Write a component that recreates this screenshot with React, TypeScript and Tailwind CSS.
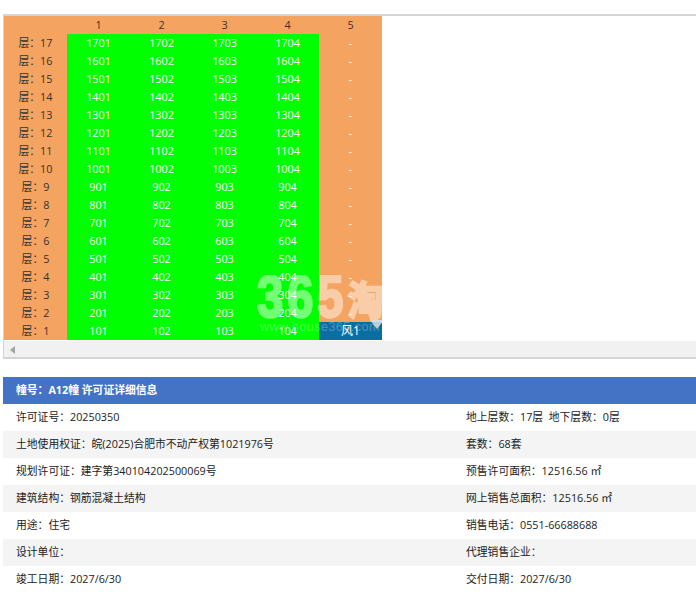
const floors = Array.from({ length: 17 }, (_, i) => 17 - i);

const info = [
  ["许可证号：20250350", "地上层数：17层  地下层数：0层"],
  ["土地使用权证：皖(2025)合肥市不动产权第1021976号", "套数：68套"],
  ["规划许可证：建字第340104202500069号", "预售许可面积：12516.56 ㎡"],
  ["建筑结构：钢筋混凝土结构", "网上销售总面积：12516.56 ㎡"],
  ["用途：住宅", "销售电话：0551-66688688"],
  ["设计单位：", "代理销售企业："],
  ["竣工日期：2027/6/30", "交付日期：2027/6/30"],
];

export default function App() {
  return (
    <div className="h-[602px] w-[696px] overflow-hidden bg-white pt-3.5 font-['Open_Sans','Noto_Sans_CJK_SC',sans-serif] text-[10.8px]">
      <div className="relative ml-[3px] h-[345px] overflow-hidden border-b-2 border-l border-t-2 border-[#d4d4d4]">
        <table className="w-[378px] table-fixed border-collapse text-center leading-[18px]">
          <thead>
            <tr className="h-[18px] bg-[#f4a460] text-[#333]">
              <th className="w-[63px] font-normal"></th>
              {[1, 2, 3, 4, 5].map((n) => (
                <th key={n} className="w-[63px] font-normal">
                  {n}
                </th>
              ))}
            </tr>
          </thead>
          <tbody>
            {floors.map((f) => (
              <tr key={f} className="h-[18px] text-white">
                <td className="bg-[#f4a460] text-[#333]">层：{f}</td>
                {[1, 2, 3, 4].map((u) => (
                  <td key={u} className="bg-[#00ff00]">
                    {f * 100 + u}
                  </td>
                ))}
                {f === 1 ? (
                  <td className="bg-[#0a6ea3] text-xs">风1</td>
                ) : (
                  <td className="bg-[#f4a460]">-</td>
                )}
              </tr>
            ))}
          </tbody>
        </table>
        <div className="mt-px flex h-[17px] items-center bg-[#f1f1f1] pl-1.5">
          <svg width="5" height="8" viewBox="0 0 5 8">
            <path d="M5 0 L0 4 L5 8 Z" fill="#a3a3a3" />
          </svg>
        </div>
        <div className="pointer-events-none absolute left-[253px] top-[259px] h-[70px] w-[125px] overflow-hidden text-white">
          <div className="flex h-[46px] items-start opacity-45 [-webkit-text-stroke:2px_white]">
            <span className="inline-block origin-top scale-y-[1.27] font-['Liberation_Sans',sans-serif] text-[47px] font-bold leading-[34px] tracking-[4px]">
              365
            </span>
            <span className="inline-block origin-top scale-y-[1.1] font-['Noto_Sans_CJK_SC',sans-serif] text-[36px] font-bold leading-[40px]">
              淘
            </span>
          </div>
          <div className="whitespace-nowrap pl-[3px] font-['Liberation_Sans',sans-serif] text-[12.5px] leading-3 tracking-[0.5px] opacity-25">
            www.house365.com
          </div>
          <svg className="absolute left-[113px] top-[45px]" width="14" height="9" viewBox="0 0 14 9">
            <path d="M0 0 L14 0 L7 9 Z" fill="#dfe6ea" opacity="0.8" />
          </svg>
        </div>
      </div>
      <div className="ml-[3px] mt-[18px] text-[#222]">
        <div className="h-[27px] bg-[#4472c4] pl-[13px] font-bold leading-[26px] text-white">
          幢号：A12幢 许可证详细信息
        </div>
        {info.map(([left, right], i) => (
          <div
            key={left}
            className={`grid h-[27px] grid-cols-[450px_1fr] pl-[13px] leading-[26px] ${
              i % 2 === 1 ? "bg-[#f4f4f4]" : "bg-white"
            }`}
          >
            <span>{left}</span>
            <span className="whitespace-pre">{right}</span>
          </div>
        ))}
      </div>
    </div>
  );
}
